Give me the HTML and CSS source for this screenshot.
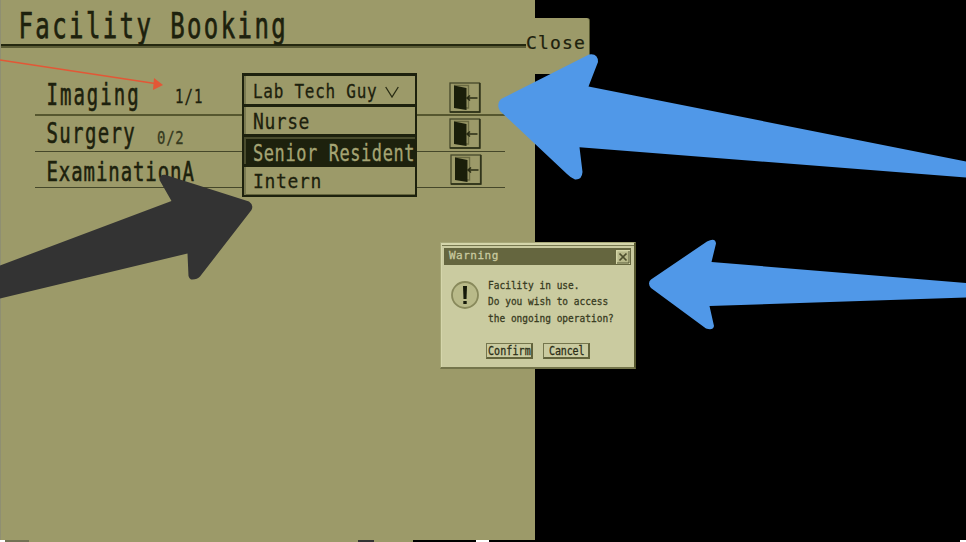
FILE: index.html
```html
<!DOCTYPE html>
<html lang="en">
<head>
<meta charset="utf-8">
<title>Facility Booking</title>
<link rel="stylesheet" href="styles.css">
</head>
<body>
<svg class="defs" width="0" height="0" aria-hidden="true">
  <symbol id="door" viewBox="0 0 32 31">
    <rect x="1" y="1" width="29.5" height="29" fill="none" stroke="#45482a" stroke-width="1.3"/>
    <path d="M1 30H31V1" fill="none" stroke="#292c14" stroke-width="1.3"/>
    <path d="M5 3.500H19.500V26H17" fill="none" stroke="#6b6b42" stroke-width="1.4"/>
    <path d="M5 3.500L17.500 6V28L5 26Z" fill="#1a1e0a"/>
    <path d="M28.500 16H18M21 13.500L18 16L21 18.500" fill="none" stroke="#292c14" stroke-width="1.6"/>
  </symbol>
</svg>
<main class="screen">
  <section class="panel">
    <header class="header"><h1 class="text title">Facility Booking</h1></header>
    <div class="list">
      <div class="row row-imaging">
        <span class="text name imaging">Imaging</span><span class="text count count-on">1/1</span>
        <button class="enter" aria-label="Enter"><svg><use href="#door"/></svg></button>
      </div>
      <div class="row row-surgery">
        <span class="text name surgery">Surgery</span><span class="text count count-off">0/2</span>
        <button class="enter" aria-label="Enter"><svg><use href="#door"/></svg></button>
      </div>
      <div class="row row-exam">
        <span class="text name exam">ExaminationA</span>
        <button class="enter" aria-label="Enter"><svg><use href="#door"/></svg></button>
      </div>
    </div>
  </section>
  <footer class="strip"><i class="s1"></i><i class="s2"></i><i class="s3"></i><i class="s4"></i><i class="s5"></i><i class="s6"></i><i class="s7"></i><i class="s8"></i><i class="s9"></i></footer>
  <button class="close"><span class="text">Close</span></button>
  <div class="menu">
    <div class="item selected"><span class="text">Lab Tech Guy</span><svg class="chevron" viewBox="0 0 14 12"><path d="M.7 1L7 11L13.300 1" fill="none" stroke="#292c14" stroke-width="1.3"/></svg></div>
    <div class="item nurse"><span class="text">Nurse</span></div>
    <div class="item senior"><span class="text">Senior Resident</span></div>
    <div class="item intern"><span class="text">Intern</span></div>
  </div>
  <div class="dialog">
    <div class="bar"><span class="text caption">Warning</span>
      <svg class="x" viewBox="0 0 14 14"><rect x=".7" y=".7" width="12.600" height="12.600" fill="#b8b98a" stroke="#d5d6a7" stroke-width="1.4"/><path d="M13 1V13H1" fill="none" stroke="#4f502f"/><path d="M3.500 3.500L10.500 10.500M10.500 3.500L3.500 10.500" stroke="#4d4e2d" stroke-width="1.7"/></svg>
    </div>
    <div class="content">
      <svg class="alert" viewBox="0 0 28 28"><circle cx="14" cy="14" r="13" fill="#b9ba89" stroke="#88895b" stroke-width="1.8"/><path d="M12 5H16L15.500 18H12.500Z" fill="#15190a"/><rect x="12.300" y="20" width="3.400" height="3" fill="#15190a"/></svg>
      <div class="message"><p class="text">Facility in use.</p><p class="text">Do you wish to access</p><p class="text">the ongoing operation?</p></div>
    </div>
    <div class="actions"><button><span class="text confirm">Confirm</span></button><button><span class="text cancel">Cancel</span></button></div>
  </div>
  <svg class="arrows" viewBox="0 0 966 542">
    <path d="M0 60L155 83.500" stroke="#e35736" stroke-width="1.4"/>
    <path d="M154 78L163 85L153 90Z" fill="#e35736"/>
    <path fill="#333" d="M0 265.500L171.500 201L159.500 180Q160 174 165 174.700L249 201.500Q254 205 251.500 210L200 276.500Q197 280 191 279.500Q189 278 188.500 276L187.500 253.500L0 298.500Z"/>
    <path fill="#5098e8" d="M501 99L589 54.500Q598 53 598 62L588.500 86.500L966 161.500V177.500L579.500 147.300L582.500 172Q582 180 575 179.500Q571 178 567 174L500 111Q496 104 501 99Z"/>
    <path fill="#5098e8" d="M651 279.500L707 241.500Q715.500 237 716 243.500L711.500 262L966 283V297.500L709.500 306L714 326Q713 331 706 328.500L651 288Q647 283 651 279.500Z"/>
  </svg>
</main>
</body>
</html>
```
FILE: styles.css
```css
* { box-sizing: border-box; }
body { margin: 0; background: #000; }
h1, p { margin: 0; font-weight: normal; }
button { padding: 0; border: 0; background: none; font: inherit; color: inherit; text-align: left; }
.defs { display: none; }
.screen { position: relative; width: 966px; height: 542px; overflow: hidden; color: #1d210d; font-family: "DejaVu Sans Mono", monospace; }

/* Text is stretched vertically around its own baseline. */
.text { display: block; flex: none; line-height: 1; white-space: pre; transform-origin: 0 .846em; -webkit-text-stroke: .25px currentColor; }

.panel { width: 535px; height: 540px; background: #9c9a69; border-left: 1px solid #8f8f72; }
.header { width: 525px; height: 48px; padding: 17.700px 0 0 17.500px; border-bottom: 2px solid #5a5b35; box-shadow: inset 0 -2px #24280f; }
.title { font-size: 24px; letter-spacing: 2.400px; transform: scaleY(1.5); -webkit-text-stroke-width: .5px; }
.list { width: 470px; margin: 27px 0 0 34px; }
.row { display: flex; align-items: flex-start; border-bottom: 1px solid #45472a; }
.row-imaging { height: 41px; border-bottom: 2px solid #56572f; }
.row-surgery { height: 36px; }
.row-exam { height: 36px; }
.name { width: 120px; margin-left: 11.500px; font-size: 19px; -webkit-text-stroke-width: .4px; }
.imaging { margin-top: 13.500px; letter-spacing: 2px; transform: scaleY(1.58); }
.surgery { margin-top: 11px; letter-spacing: 1.360px; transform: scaleY(1.53); }
.exam { margin-top: 13px; letter-spacing: .920px; transform: scaleY(1.43); }
.count { font-size: 14px; }
.count-on { margin: 15.500px 0 0 8.500px; letter-spacing: 1.100px; transform: scaleY(1.4); }
.count-off { margin: 16px 0 0 -9.500px; letter-spacing: .7px; transform: scaleY(1.22); color: #35391e; }
.enter { width: 32px; height: 31px; margin: 7px 24px 0 auto; }
.enter svg { display: block; width: 32px; height: 31px; }
.row-surgery .enter { margin-top: 2px; }
.row-exam .enter { margin: 2px 23px 0 auto; }

.strip { display: flex; height: 2px; background: #000; }
.s1 { width: 5px; background: #fff; }
.s2 { width: 24px; background: #727254; }
.s3 { width: 329px; background: #9c9a69; }
.s4 { width: 16px; background: #333; }
.s5 { width: 39px; background: #9c9a69; }
.s6 { width: 63px; }
.s7 { width: 13px; background: #fff; }
.s8 { width: 471px; }
.s9 { width: 6px; background: #fff; }

.close { position: absolute; left: 526px; top: 18px; display: flex; align-items: flex-start; width: 64px; height: 56px; padding-top: 16px; background: #9c9a69; border-right: 1px solid #55562f; border-radius: 0 3px 0 0; }
.close .text { font-size: 18px; letter-spacing: 1.160px; transform: scaleY(.98); }

.menu { position: absolute; left: 242px; top: 73px; width: 175px; height: 124px; border: 2px solid #1d210d; border-top-width: 3px; background: #9c9a69; }
.item { display: flex; padding-left: 9px; border-bottom: 3px solid #1d210d; box-shadow: inset 2px 0 #7a7a50; }
.selected { height: 31px; padding-top: 9px; }
.selected .text { font-size: 16px; letter-spacing: .740px; transform: scaleY(1.26); }
.chevron { width: 14px; height: 12px; margin: 1px 0 0 8px; }
.nurse { height: 30px; padding-top: 7px; }
.nurse .text { font-size: 18px; letter-spacing: .560px; transform: scaleY(1.18); }
.senior { height: 30px; padding-top: 9.500px; background: #1d210d; color: #a5a473; box-shadow: inset 2px 2px #4a4c2d; }
.senior .text { font-size: 17px; letter-spacing: .570px; transform: scaleY(1.38); }
.intern { height: 28px; padding-top: 5.500px; border-bottom: 0; box-shadow: inset 2px 0 #7a7a50, inset 0 -1px #65663d; }
.intern .text { font-size: 18px; letter-spacing: .660px; transform: scaleY(1.09); }

.dialog { position: absolute; left: 440px; top: 242px; width: 196px; height: 127px; padding: 5px 3px 0; background: #cacba0; border: 1px solid #a7a878; border-right: 2px solid #56572f; border-bottom: 2px solid #74754b; box-shadow: inset 1px 2px #d5d6ab, inset 0 3px #777850; }
.bar { display: flex; height: 17px; padding: 1.500px 0 0 5px; background: #65663f; color: #cacba0; }
.caption { font-size: 11px; letter-spacing: .5px; transform: scaleY(1.02); }
.x { width: 14px; height: 14px; margin: 0 1px 0 auto; }
.content { display: flex; height: 71px; padding: 16px 0 0 7px; }
.alert { width: 28px; height: 28px; }
.message { padding: 0 0 0 9px; color: #373a20; }
.message .text { height: 16.300px; font-size: 9.500px; transform: scaleY(1.1); }
.actions { display: flex; gap: 10px; padding: 7px 0 0 42px; }
.actions button { width: 47px; height: 16px; padding: 3px 0 0 1px; border: 1px solid #75764d; border-right: 2px solid #62633b; border-bottom: 2px solid #62633b; }
.actions .text { font-size: 10px; transform: scaleY(1.17); color: #2b2e17; }
.actions .confirm { letter-spacing: .1px; }
.actions .cancel { margin-left: 4px; letter-spacing: -.120px; }

.arrows { position: absolute; left: 0; top: 0; width: 966px; height: 542px; pointer-events: none; }
```
